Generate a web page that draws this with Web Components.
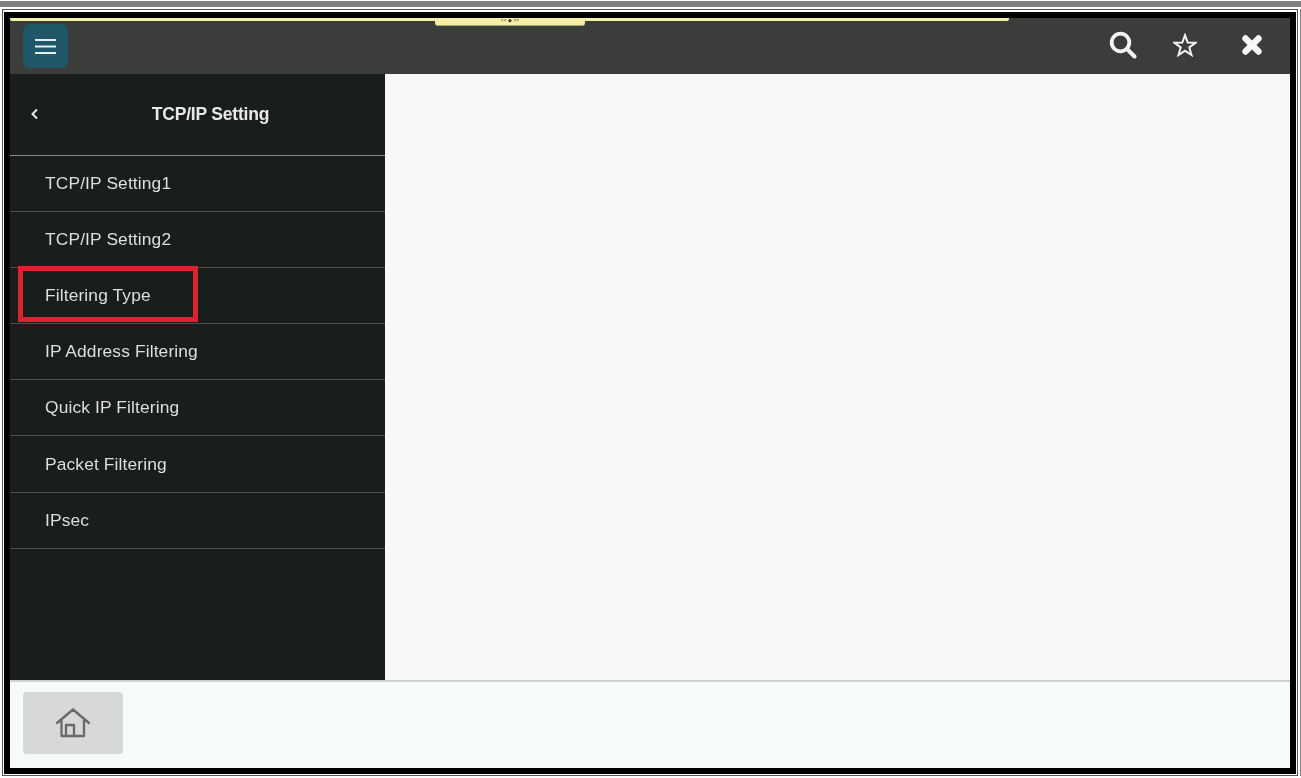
<!DOCTYPE html>
<html lang="en">
<head>
<meta charset="utf-8">
<title>TCP/IP Setting</title>
<style>
    html, body { margin: 0; padding: 0; background: #fff; }
</style>
</head>
<body>
<app-frame>
    <top-bar slot="top"></top-bar>
    <side-menu slot="side" heading="TCP/IP Setting">
        <menu-item>TCP/IP Setting1</menu-item>
        <menu-item>TCP/IP Setting2</menu-item>
        <menu-item marked>Filtering Type</menu-item>
        <menu-item>IP Address Filtering</menu-item>
        <menu-item>Quick IP Filtering</menu-item>
        <menu-item>Packet Filtering</menu-item>
        <menu-item>IPsec</menu-item>
    </side-menu>
    <bottom-bar slot="bottom"></bottom-bar>
</app-frame>
<script>
"use strict";

// outer screenshot frame: grey band, double rule, black bezel, and the panel layout.
class AppFrame extends HTMLElement {
    constructor() {
        super();
        this.attachShadow({ mode: 'open' });
        this.shadowRoot.innerHTML = `
<style>
    :host { display: block; width: 1301px; height: 778px; overflow: hidden; background: #fff; }
    * { box-sizing: border-box; }
    .band { height: 6px; margin-top: 1px; background: #808080; }
    .row { display: flex; margin-top: 2px; height: 767px; padding-left: 2px; }
    .rule { width: 1296px; height: 767px; border: 1px solid #555; padding: 2px 1px 1px 1px; }
    .side-line { width: 1px; margin-left: 2px; background: #808080; }
    .bezel { height: 762px; border: 6px solid #000; }
    .screen { height: 100%; display: flex; flex-direction: column; filter: blur(0.35px); }
    .middle { flex: 1; display: flex; min-height: 0; }
    .content { flex: 1; background: #f8f8f8; }
</style>
<div class="band"></div>
<div class="row">
    <div class="rule">
        <div class="bezel">
            <div class="screen">
                <slot name="top"></slot>
                <div class="middle">
                    <slot name="side"></slot>
                    <div class="content"></div>
                </div>
                <slot name="bottom"></slot>
            </div>
        </div>
    </div>
    <div class="side-line"></div>
</div>`;
    }
}

// dark header with menu button, yellow notification strip and action icons.
class TopBar extends HTMLElement {
    constructor() {
        super();
        this.attachShadow({ mode: 'open' });
        this.shadowRoot.innerHTML = `
<style>
    :host { display: block; position: relative; height: 56px; background: #3a3d3a; font-family: "Liberation Sans", Arial, sans-serif; }
    .bar { display: flex; align-items: center; height: 100%; padding: 0 27px 0 13px; }
    .menu { width: 45px; height: 44px; border-radius: 7px; background: #1f5668; display: flex; align-items: center; justify-content: center; }
    .actions { margin: -2px 0 0 auto; display: flex; align-items: center; gap: 36px; }
    .actions .close { margin-left: 8px; }
    svg { display: block; }
    .strip { position: absolute; left: 0; top: 0; width: 999px; height: 3px; background: #f6f0a6; border-radius: 0 0 2px 2px; }
    .tab { position: absolute; left: 425px; top: 0; width: 150px; height: 7px; background: #f6f0a6; border-bottom: 1px solid #a8a56e; border-radius: 0 0 3px 3px; font-size: 5px; line-height: 5px; text-align: center; color: #333; }
</style>
<div class="bar">
    <div class="menu">
        <svg width="21" height="17" viewBox="0 0 21 17"><path d="M0 2h21M0 8.500h21M0 15h21" stroke="#dff0f2" stroke-width="2.200"/></svg>
    </div>
    <div class="actions">
        <svg width="28" height="28" viewBox="0 0 28 28"><circle cx="11.500" cy="11.500" r="8.800" fill="none" stroke="#f4f4f4" stroke-width="3.800"/><path d="M18 18l7.500 7.500" stroke="#f4f4f4" stroke-width="4" stroke-linecap="round"/></svg>
        <svg width="24" height="24" viewBox="0 0 24 24"><path d="M12 2.200l2.700 7.300 7.800.300-6.200 4.700 2.200 7.500-6.500-4.400-6.500 4.400 2.200-7.500-6.200-4.700 7.800-.300z" fill="none" stroke="#f4f4f4" stroke-width="2" stroke-linejoin="miter"/></svg>
        <svg class="close" width="22" height="22" viewBox="0 0 22 22"><path d="M4.500 4.500l13 13M17.500 4.500l-13 13" stroke="#f8f8f8" stroke-width="6.400" stroke-linecap="round"/></svg>
    </div>
</div>
<div class="strip"></div>
<div class="tab">&lt;&lt; ◆ &gt;&gt;</div>`;
    }
}

// left navigation column, items come in through the slot.
class SideMenu extends HTMLElement {
    constructor() {
        super();
        this.attachShadow({ mode: 'open' });
        this.shadowRoot.innerHTML = `
<style>
    :host { display: block; width: 375px; height: 100%; background: #1a1e1b; color: #dedede; font-family: "Liberation Sans", Arial, sans-serif; }
    .head { display: flex; align-items: center; height: 82px; padding: 0 0 0 20px; border-bottom: 1px solid #8a8c8a; box-sizing: border-box; }
    .head svg { display: block; flex: none; margin-top: -2px; }
    .title { flex: 1; text-align: center; padding-right: 3px; font-size: 17.500px; font-weight: bold; color: #e8e8e8; letter-spacing: -0.200px; }
</style>
<div class="head">
    <svg width="9" height="12" viewBox="0 0 9 12"><path d="M7 1.500L2.500 6 7 10.500" fill="none" stroke="#e8e8e8" stroke-width="2"/></svg>
    <div class="title"></div>
</div>
<slot></slot>`;
        this.shadowRoot.querySelector('.title').textContent = this.getAttribute('heading');
    }
}

// one row of the navigation list, "marked" draws the red callout over it.
class MenuItem extends HTMLElement {
    constructor() {
        super();
        this.attachShadow({ mode: 'open' });
        this.shadowRoot.innerHTML = `
<style>
    :host { display: flex; align-items: center; position: relative; box-sizing: border-box; height: 56.100px; padding: 0 0 0 35px; border-bottom: 1px solid #4b4e4c; font-size: 17.400px; letter-spacing: 0.120px; }
    .mark { display: none; position: absolute; left: 8px; top: -2px; width: 180px; height: 56px; box-sizing: border-box; border: 5px solid #d9232e; }
    :host([marked]) .mark { display: block; }
</style>
<slot></slot>
<div class="mark"></div>`;
    }
}

// footer with the home button.
class BottomBar extends HTMLElement {
    constructor() {
        super();
        this.attachShadow({ mode: 'open' });
        this.shadowRoot.innerHTML = `
<style>
    :host { display: block; box-sizing: border-box; height: 88px; padding: 10px 0 0 13px; background: #f6fbf8; border-top: 2px solid #cfd1cf; }
    .home { width: 100px; height: 62px; border-radius: 4px; background: #d6d9d7; display: flex; align-items: center; justify-content: center; }
    svg { display: block; }
</style>
<div class="home">
    <svg width="34" height="30" viewBox="0 0 34 30"><path d="M1 15L17 1.500 33 15M5.500 12V28H28V12M10 28V17H18V28" fill="none" stroke="#686a68" stroke-width="2.300" stroke-linejoin="round" stroke-linecap="round"/></svg>
</div>`;
    }
}

window.customElements.define('app-frame', AppFrame);
window.customElements.define('top-bar', TopBar);
window.customElements.define('side-menu', SideMenu);
window.customElements.define('menu-item', MenuItem);
window.customElements.define('bottom-bar', BottomBar);
</script>
</body>
</html>
